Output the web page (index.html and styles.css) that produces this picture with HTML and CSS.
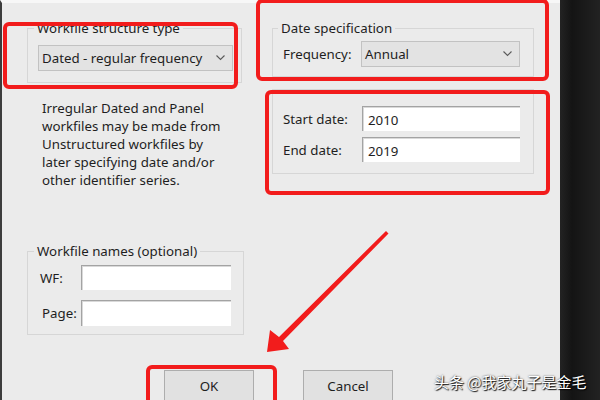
FILE: index.html
```html
<!DOCTYPE html>
<html lang="en">
<head>
<meta charset="utf-8">
<title>Workfile Create</title>
<link rel="stylesheet" href="styles.css">
</head>
<body>
<div class="screen">
  <div class="dialog">
    <div class="main">
      <div class="col">
        <fieldset class="group g-structure">
          <legend>Workfile structure type</legend>
          <div class="combo combo-wide"><span>Dated - regular frequency</span>
            <svg class="chev" width="9" height="6" viewBox="0 0 9 6"><polyline points="0.5,0.5 4.5,4.5 8.5,0.5"/></svg>
          </div>
        </fieldset>
        <p class="note">Irregular Dated and Panel workfiles may be made from Unstructured workfiles by later specifying date and/or other identifier series.</p>
        <fieldset class="group g-names">
          <legend>Workfile names (optional)</legend>
          <div class="form form-names">
            <label class="lbl">WF:</label><div class="field"></div>
            <label class="lbl lbl-page">Page:</label><div class="field field-tall"></div>
          </div>
        </fieldset>
      </div>
      <div class="col">
        <fieldset class="group g-spec">
          <legend>Date specification</legend>
          <div class="form form-spec">
            <label class="lbl">Frequency:</label>
            <div class="combo"><span>Annual</span>
              <svg class="chev" width="9" height="6" viewBox="0 0 9 6"><polyline points="0.5,0.5 4.5,4.5 8.5,0.5"/></svg>
            </div>
          </div>
        </fieldset>
        <fieldset class="group g-dates">
          <div class="form form-dates">
            <label class="lbl">Start date:</label><div class="field">2010</div>
            <label class="lbl">End date:</label><div class="field">2019</div>
          </div>
        </fieldset>
      </div>
    </div>
    <div class="actions">
      <button class="btn">OK</button>
      <button class="btn">Cancel</button>
    </div>
  </div>
  <div class="backdrop"></div>

  <div class="mark m1"></div>
  <div class="mark m2"></div>
  <div class="mark m3"></div>
  <div class="mark m4"></div>
  <svg class="arrow" width="600" height="400" viewBox="0 0 600 400">
    <polygon points="267,352 270,330 279,337 386,231 388.5,233.5 283,341 289,349"/>
  </svg>
  <div class="watermark">头条 @我家丸子是金毛</div>
</div>
</body>
</html>
```

FILE: styles.css
```css
html, body {
  margin: 0;
  padding: 0;
}
body {
  width: 600px;
  height: 400px;
  overflow: hidden;
  font-family: "Noto Sans", "Liberation Sans", sans-serif;
  font-size: 13.3px;
  color: #1e1e1e;
}
.screen {
  position: relative;
  display: flex;
  width: 600px;
  height: 400px;
}
.dialog {
  flex: 0 0 558px;
  height: 397px;
  background: #ebebeb;
  border-left: 2px solid #3c3c3c;
  border-top: 3px solid #f7f7f7;
}
.backdrop {
  flex: 1;
  background: linear-gradient(to right, #232323, #141414 30%, #1b1b1b 65%, #222 100%);
}
.main {
  display: grid;
  grid-template-columns: 217px 262px;
  column-gap: 28px;
  padding: 17px 0 0 25px;
}
.col {
  display: flex;
  flex-direction: column;
}
.group {
  margin: 0;
  border: 1px solid #d6d6d6;
  min-width: 0;
  box-sizing: border-box;
  padding-left: 0;
  padding-right: 0;
}
.group legend {
  padding: 0 3px;
  margin-left: 6px;
  line-height: 16px;
}
.g-structure {
  width: 215px;
  padding-top: 9px;
  padding-bottom: 11px;
}
.g-structure .combo {
  margin-left: 10px;
}
.combo {
  display: flex;
  align-items: center;
  justify-content: space-between;
  height: 26px;
  box-sizing: border-box;
  background: #e3e3e3;
  border: 1px solid #c2c2c2;
  padding: 0 7px 0 3px;
}
.combo-wide {
  width: 195px;
}
.chev polyline {
  fill: none;
  stroke: #5a5a5a;
  stroke-width: 1.1;
}
.note {
  margin: 16px 0 0 15px;
  line-height: 18px;
  width: 186px;
}
.g-names {
  margin-top: 54px;
  padding-top: 6px;
  padding-bottom: 8px;
}
.form {
  display: grid;
  align-items: center;
}
.form-names {
  margin-left: 12px;
  grid-template-columns: 41px 150px;
  row-gap: 10px;
}
.lbl-page {
  padding-left: 2px;
}
.field {
  height: 25px;
  box-sizing: border-box;
  background: #fff;
  border-top: 1px solid #a3a3a3;
  border-left: 1px solid #a3a3a3;
  box-shadow: inset 1px 1px 0 #d9d9d9;
  padding: 4px 0 0 5px;
  line-height: 18px;
}
.field-tall {
  height: 26px;
}
.g-spec {
  padding-top: 5px;
  padding-bottom: 9px;
}
.g-spec legend {
  margin-left: 5px;
}
.form-spec {
  margin-left: 10px;
  grid-template-columns: 78px 159px;
}
.g-dates {
  margin-top: 12px;
  padding-top: 16px;
  padding-bottom: 11px;
}
.form-dates {
  margin-left: 10px;
  grid-template-columns: 79px 158px;
  row-gap: 6px;
}
.actions {
  display: flex;
  gap: 49px;
  padding: 35px 0 0 162px;
}
.btn {
  width: 90px;
  height: 31px;
  margin: 0;
  font: inherit;
  color: #1e1e1e;
  background: #e1e1e1;
  border: 1px solid #adadad;
  padding: 0;
}

/* annotations */
.mark {
  position: absolute;
  border: 4px solid #f21c1c;
  border-radius: 6px;
  box-sizing: border-box;
}
.m1 { left: 3px; top: 22px; width: 235px; height: 67px; }
.m2 { left: 256px; top: -1px; width: 293px; height: 82px; }
.m3 { left: 265px; top: 90px; width: 285px; height: 105px; }
.m4 { left: 146px; top: 365px; width: 131px; height: 50px; }
.arrow {
  position: absolute;
  left: 0;
  top: 0;
}
.arrow polygon {
  fill: #f21c1c;
}
.watermark {
  position: absolute;
  left: 434px;
  top: 372px;
  font-family: "Noto Sans CJK SC", sans-serif;
  font-size: 15px;
  line-height: 20px;
  color: #fff;
  text-shadow: 1px 1px 1px rgba(0, 0, 0, 0.9), 0 0 2px rgba(0, 0, 0, 0.7);
  white-space: nowrap;
}
```
